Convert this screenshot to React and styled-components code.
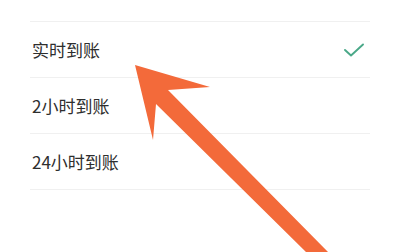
import styled, { createGlobalStyle } from 'styled-components'

const GlobalStyle = createGlobalStyle`
  html, body {
    margin: 0;
    padding: 0;
    background: #ffffff;
  }
`

const Page = styled.div`
  position: relative;
  width: 400px;
  height: 252px;
  overflow: hidden;
  background: #ffffff;
  font-family: 'Noto Sans CJK SC', 'Noto Sans', sans-serif;
`

const List = styled.ul`
  list-style: none;
  margin: 0;
  padding: 21px 30px 0 30px;
`

const Row = styled.li`
  display: flex;
  align-items: center;
  justify-content: space-between;
  height: 55px;
  padding: 0 6px 0 2px;
  border-top: 1px solid #f0f0f0;
  border-bottom: ${(p) => (p.$last ? '1px solid #f0f0f0' : 'none')};
  font-size: 17px;
  color: #2e2e2e;
`

const Arrow = styled.svg`
  position: absolute;
  left: 0;
  top: 0;
  pointer-events: none;
`

const Check = () => (
  <svg width="20" height="14" viewBox="0 0 20 14">
    <path d="M1 7 L7 12.5 L19 1.5" fill="none" stroke="#4aa888" strokeWidth="1.9" strokeLinecap="round" strokeLinejoin="round" />
  </svg>
)

const options = ['实时到账', '2小时到账', '24小时到账']

export default function App() {
  return (
    <Page>
      <GlobalStyle />
      <List>
        {options.map((o, i) => (
          <Row key={o} $last={i === options.length - 1}>
            <span>{o}</span>
            {i === 0 && <Check />}
          </Row>
        ))}
      </List>
      <Arrow width="400" height="252" viewBox="0 0 400 252">
        <polygon
          points="135,65 210,87 168,90 328,252 306,252 156,104 153,140"
          fill="#f36a3a"
        />
      </Arrow>
    </Page>
  )
}
